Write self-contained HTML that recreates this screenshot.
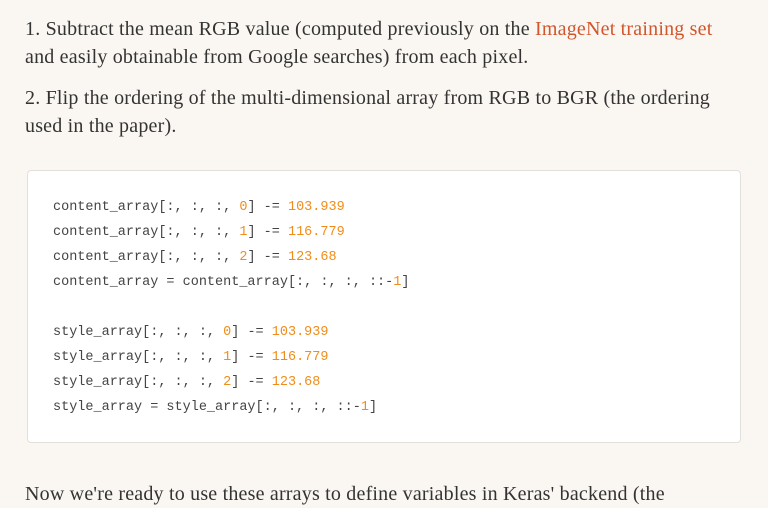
<!DOCTYPE html>
<html><head><style>
body{margin:0;background:#faf7f2;width:768px;height:485px;overflow:hidden;font-family:"Liberation Serif",serif;color:#333;}
p{position:absolute;left:25px;margin:0;font-size:20px;line-height:28px;width:740px;white-space:nowrap;letter-spacing:0.2px}
a{color:#d2552c;text-decoration:none}
.code{position:absolute;left:27px;top:170px;width:714px;height:273px;background:#fff;border:1px solid #e2e0dc;border-radius:4px;box-sizing:border-box;}
pre{margin:0;position:absolute;left:25px;top:24px;font-family:"Liberation Mono","Noto Sans CJK SC",monospace;font-size:13.5px;line-height:25px;color:#444;}
.n{color:#f08d1a}
</style></head><body>
<p style="top:15px">1. Subtract the mean RGB value (computed previously on the <a>ImageNet training set</a><br>and easily obtainable from Google searches) from each pixel.</p>
<p style="top:84px">2. Flip the ordering of the multi-dimensional array from RGB to BGR (the ordering<br>used in the paper).</p>
<div class="code"><pre>content_array[:, :, :, <span class="n">0</span>] -= <span class="n">103.939</span>
content_array[:, :, :, <span class="n">1</span>] -= <span class="n">116.779</span>
content_array[:, :, :, <span class="n">2</span>] -= <span class="n">123.68</span>
content_array = content_array[:, :, :, ::-<span class="n">1</span>]

style_array[:, :, :, <span class="n">0</span>] -= <span class="n">103.939</span>
style_array[:, :, :, <span class="n">1</span>] -= <span class="n">116.779</span>
style_array[:, :, :, <span class="n">2</span>] -= <span class="n">123.68</span>
style_array = style_array[:, :, :, ::-<span class="n">1</span>]</pre></div>
<p style="top:480px">Now we're ready to use these arrays to define variables in Keras' backend (the</p>
</body></html>
